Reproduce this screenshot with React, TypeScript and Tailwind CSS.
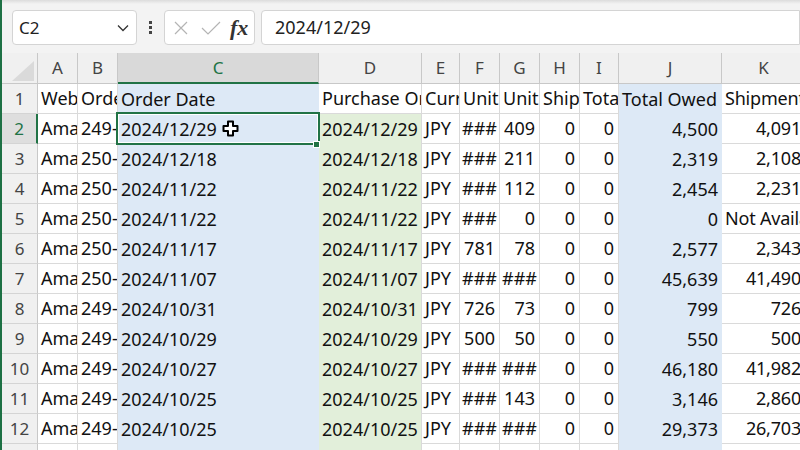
import React from "react";

type Fill = "blue" | "green" | undefined;

const COLS = ["A", "B", "C", "D", "E", "F", "G", "H", "I", "J", "K"];

const HEADER_ROW = ["Web", "Order ID", "Order Date", "Purchase Order", "Currency", "Unit Price", "Unit Tax", "Shipping", "Total Discounts", "Total Owed", "Shipment Subtotal"];

const ROWS: string[][] = [
  ["Amazon", "249-", "2024/12/29", "2024/12/29", "JPY", "###", "409", "0", "0", "4,500", "4,091"],
  ["Amazon", "250-", "2024/12/18", "2024/12/18", "JPY", "###", "211", "0", "0", "2,319", "2,108"],
  ["Amazon", "250-", "2024/11/22", "2024/11/22", "JPY", "###", "112", "0", "0", "2,454", "2,231"],
  ["Amazon", "250-", "2024/11/22", "2024/11/22", "JPY", "###", "0", "0", "0", "0", "Not Available"],
  ["Amazon", "250-", "2024/11/17", "2024/11/17", "JPY", "781", "78", "0", "0", "2,577", "2,343"],
  ["Amazon", "250-", "2024/11/07", "2024/11/07", "JPY", "###", "###", "0", "0", "45,639", "41,490"],
  ["Amazon", "249-", "2024/10/31", "2024/10/31", "JPY", "726", "73", "0", "0", "799", "726"],
  ["Amazon", "249-", "2024/10/29", "2024/10/29", "JPY", "500", "50", "0", "0", "550", "500"],
  ["Amazon", "249-", "2024/10/27", "2024/10/27", "JPY", "###", "###", "0", "0", "46,180", "41,982"],
  ["Amazon", "249-", "2024/10/25", "2024/10/25", "JPY", "###", "143", "0", "0", "3,146", "2,860"],
  ["Amazon", "249-", "2024/10/25", "2024/10/25", "JPY", "###", "###", "0", "0", "29,373", "26,703"],
  ["", "", "", "", "", "", "", "", "", "", ""],
];

function fillFor(col: number, row: number): Fill {
  if (col === 2) return "blue";
  if (col === 9) return "blue";
  if (col === 3 && row > 1) return "green";
  return undefined;
}

function alignFor(text: string, row: number): "l" | "r" | "c" {
  if (row === 1) return "l";
  if (text === "###") return "c";
  if (/^[0-9,]+$/.test(text)) return "r";
  return "l";
}

function Cell({ text, col, row }: { text: string; col: number; row: number }) {
  const fill = fillFor(col, row);
  const align = alignFor(text, row);
  const selected = col === 2 && row === 2;
  return (
    <div
      className={[
        "relative h-[30px]",
        selected ? "z-10" : "",
        fill === "blue" ? "bg-[#dde9f6]" : fill === "green" ? "bg-[#e2efda] border-r border-[#dadada]" : "bg-white border-r border-b border-[#dadada]",
      ].join(" ")}
    >
      <div
        className={[
          "h-full w-full flex items-center overflow-hidden whitespace-nowrap text-[18px] text-[#111]",
          col === 10 ? "tracking-[-0.2px]" : "",
          align === "r" ? "justify-end pr-[4px]" : align === "c" ? "justify-center" : "pl-[3px]",
        ].join(" ")}
      >
        {text}
      </div>
      {selected && (
        <>
          <div className="absolute -left-[2px] -top-[2px] -right-px -bottom-px border-2 border-[#217346]">
            <div className="h-full w-full border border-white" />
          </div>
          <div className="absolute left-[195px] top-[27px] w-[7px] h-[7px] bg-[#217346] border border-white" />
          <svg className="absolute left-[104px] top-[6px]" width="17" height="17" viewBox="0 0 17 17">
            <path d="M6 1.5h5v4.5h4.5v5h-4.5v4.5h-5v-4.5h-4.5v-5h4.5z" fill="white" stroke="black" strokeWidth="2" strokeLinejoin="round" />
          </svg>
        </>
      )}
    </div>
  );
}

export default function App() {
  return (
    <div className="w-[800px] h-[450px] overflow-hidden bg-white border-l-2 border-[#1e7145] flex flex-col" style={{ fontFamily: '"Noto Sans", "Noto Sans CJK JP", sans-serif' }}>
      {/* formula bar */}
      <div className="h-[53px] shrink-0 bg-[#f3f3f3] relative flex items-start pt-[10px]">
        <div className="absolute left-0 right-0 top-0 h-[4px] bg-gradient-to-b from-[#dcdcdc] to-[#f3f3f3]" />
        <div className="ml-[10px] w-[125px] h-[35px] bg-white border border-[#d4d4d4] rounded-[4px] flex items-center pl-[6px] pr-[7px]">
          <span className="text-[17px] text-[#222] flex-1">C2</span>
          <svg width="12" height="8" viewBox="0 0 12 8" fill="none" stroke="#333" strokeWidth="1.3">
            <path d="M1 1.5l5 5 5-5" />
          </svg>
        </div>
        <div className="w-[27px] h-[35px] flex flex-col items-center justify-center gap-[2px]">
          <div className="w-[3px] h-[3px] bg-[#444]" />
          <div className="w-[3px] h-[3px] bg-[#444]" />
          <div className="w-[3px] h-[3px] bg-[#444]" />
        </div>
        <div className="w-[91px] h-[35px] bg-white border border-[#d4d4d4] rounded-[4px] flex items-center pl-[8px]">
          <svg width="16" height="16" viewBox="0 0 16 16" fill="none" stroke="#b4b4b4" strokeWidth="1.2">
            <path d="M2 2l12 12M14 2L2 14" />
          </svg>
          <svg className="ml-[12px]" width="20" height="16" viewBox="0 0 20 16" fill="none" stroke="#b4b4b4" strokeWidth="1.2">
            <path d="M1 8l6 6L19 2" />
          </svg>
          <span className="ml-[9px] text-[22px] italic font-bold text-[#333] leading-none" style={{ fontFamily: '"Liberation Serif", serif' }}>
            fx
          </span>
        </div>
        <div className="ml-[6px] flex-1 h-[35px] bg-white border border-[#d4d4d4] rounded-l-[4px] flex items-center pl-[13px]">
          <span className="text-[18px] text-[#222]">2024/12/29</span>
        </div>
      </div>

      {/* sheet */}
      <div className="grid grid-cols-[36px_40px_40px_201px_103px_38px_40px_40px_40px_39px_103px_84px] w-[804px]">
        {/* column headers */}
        <div className="h-[31px] bg-[#f0f0f0] border-r border-b border-[#c8c8c8] relative">
          <svg className="absolute right-[3px] bottom-[2px]" width="22" height="20" viewBox="0 0 22 20">
            <path d="M22 0V20H0z" fill="#dadada" />
          </svg>
        </div>
        {COLS.map((c, i) => (
          <div
            key={c}
            className={
              i === 2
                ? "h-[31px] bg-[#d9d9d9] border-r border-[#c8c8c8] border-b-2 border-b-[#217346] flex items-center justify-center text-[17px] text-[#217346]"
                : "h-[31px] bg-[#f0f0f0] border-r border-b border-[#c8c8c8] flex items-center justify-center text-[17px] text-[#444]"
            }
          >
            {c}
          </div>
        ))}

        {[HEADER_ROW, ...ROWS].map((row, r) => (
          <React.Fragment key={r}>
            <div
              className={
                r + 1 === 2
                  ? "h-[30px] bg-[#dedede] border-r-2 border-r-[#217346] border-b border-[#d4d4d4] flex items-center justify-center text-[17px] text-[#217346]"
                  : "h-[30px] bg-[#f0f0f0] border-r border-b border-[#d4d4d4] border-r-[#c8c8c8] flex items-center justify-center text-[17px] text-[#444]"
              }
            >
              {r + 1}
            </div>
            {row.map((t, c) => (
              <Cell key={c} text={t} col={c} row={r + 1} />
            ))}
          </React.Fragment>
        ))}
      </div>
    </div>
  );
}
